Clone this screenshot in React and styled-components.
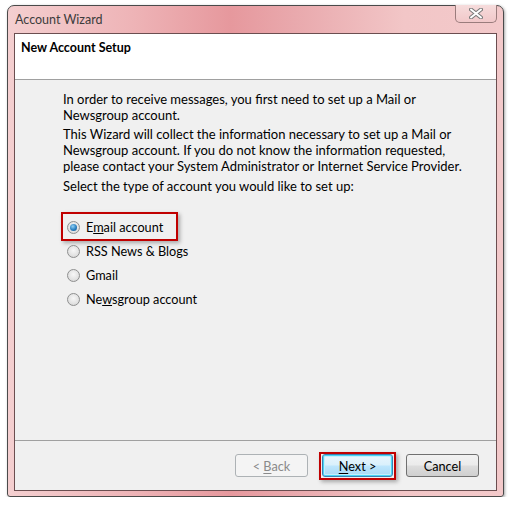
import React from 'react'
import styled, { createGlobalStyle, css } from 'styled-components'

const GlobalStyle = createGlobalStyle`
    html, body {
        margin: 0;
        padding: 0;
        background: #ffffff;
    }
    body {
        font-family: Lato, "Liberation Sans", sans-serif;
        font-size: 12px;
        color: #000;
    }
`

const Window = styled.div`
    box-sizing: border-box;
    width: 497px;
    height: 492px;
    margin: 5px 0 0 7px;
    display: flex;
    flex-direction: column;
    border: 1px solid #4a4a4a;
    border-radius: 7px 7px 3px 3px;
    background: linear-gradient(90deg, #f4cfd0 0%, #eeb4b7 25%, #e6989d 45%, #e9a9ad 58%, #f2c6c7 80%, #f3c9ca 100%);
    box-shadow: 1px 1px 3px rgba(0, 0, 0, 0.35);
`

const TitleBar = styled.div`
    height: 27px;
    display: flex;
    align-items: flex-start;
    justify-content: space-between;
    padding-left: 7px;
    .title-text {
        margin-top: 6px;
        color: #3c3c3c;
        font-size: 12.5px;
    }
`

const CloseButton = styled.div`
    box-sizing: border-box;
    width: 42px;
    height: 18px;
    margin-top: -1px;
    margin-right: 6px;
    border: 1px solid #9a7c7c;
    border-top: none;
    border-radius: 0 0 5px 5px;
    background: linear-gradient(180deg, #f6dcdc 0%, #f1c8c9 100%);
    display: flex;
    align-items: center;
    justify-content: center;
`

const Frame = styled.div`
    flex: 1;
    margin: 0 6px 5px 6px;
    border: 1px solid #6b4e50;
    background: #f0f0f0;
    display: flex;
    flex-direction: column;
`

const Header = styled.div`
    height: 46px;
    background: #ffffff;
    border-bottom: 1px solid #a0a0a0;
    padding: 6px 0 0 6px;
    box-sizing: border-box;
    .header-title {
        font-weight: bold;
        font-size: 12.5px;
    }
`

const Body = styled.div`
    flex: 1;
    padding: 11px 30px 0 48px;
`

const Paragraph = styled.p`
    margin: 0 0 ${p => p.gap || 2}px 0;
    line-height: 16px;
    font-size: 13px;
    white-space: nowrap;
`

const OptionList = styled.div`
    margin-top: 21px;
    display: flex;
    flex-direction: column;
`

const Option = styled.label`
    position: relative;
    height: 24px;
    display: flex;
    align-items: center;
    gap: 6px;
    padding-left: 4px;
    font-size: 12.7px;
    ${p => p.highlighted && css`
        &::after {
            content: '';
            position: absolute;
            left: -2px;
            top: -3px;
            width: 113px;
            height: 25px;
            border: 2px solid #c00000;
            box-shadow: 2px 2px 4px rgba(0, 0, 0, 0.3);
            pointer-events: none;
        }
    `}
`

const Radio = styled.span`
    box-sizing: border-box;
    width: 13px;
    height: 13px;
    border-radius: 50%;
    border: 1px solid #8e8f8f;
    background: radial-gradient(circle at 50% 40%, #f7f7f7 0%, #e2e2e2 60%, #cfcfcf 100%);
    display: flex;
    align-items: center;
    justify-content: center;
    &::before {
        content: '';
        display: ${p => (p.checked ? 'block' : 'none')};
        width: 7px;
        height: 7px;
        border-radius: 50%;
        background: radial-gradient(circle at 40% 35%, #8fd0f4 0%, #2a7fc0 55%, #0d4f8a 100%);
    }
`

const Footer = styled.div`
    height: 50px;
    border-top: 1px solid #a0a0a0;
    box-sizing: border-box;
    display: flex;
    justify-content: flex-end;
    align-items: flex-start;
    padding: 13px 17px 0 0;
`

const Button = styled.button`
    position: relative;
    box-sizing: border-box;
    width: ${p => p.width || 73}px;
    height: 23px;
    margin-left: ${p => p.gap || 0}px;
    padding: 0;
    font-family: inherit;
    font-size: 12.7px;
    border-radius: 3px;
    border: 1px solid #707070;
    color: #000;
    background: linear-gradient(180deg, #f2f2f2 0%, #ebebeb 48%, #dddddd 52%, #cfcfcf 100%);
    ${p => p.disabled && css`
        border-color: #adb2b5;
        color: #8a8a8a;
        background: #f4f4f4;
    `}
    ${p => p.focused && css`
        border-color: #3c7fb1;
        box-shadow: inset 0 0 0 1px #48d6f6, inset 0 0 0 2px #c6eefc;
        background: linear-gradient(180deg, #eaf6fd 0%, #d9f0fc 48%, #bee6fd 52%, #a7d9f5 100%);
        &::after {
            content: '';
            position: absolute;
            left: -4px;
            top: -3px;
            right: -4px;
            bottom: -4px;
            border: 2px solid #c00000;
            box-shadow: 2px 2px 4px rgba(0, 0, 0, 0.3);
        }
    `}
    u {
        text-underline-offset: 2px;
    }
`

const CloseGlyph = () => (
    <svg width="14" height="11" viewBox="0 0 14 11">
        <path d="M2 1.5 L12 9.5 M12 1.5 L2 9.5" stroke="#7a7a7a" strokeWidth="4" strokeLinecap="round" />
        <path d="M2 1.5 L12 9.5 M12 1.5 L2 9.5" stroke="#ffffff" strokeWidth="2" strokeLinecap="round" />
    </svg>
)

const options = [
    { label: <>E<u>m</u>ail account</>, checked: true },
    { label: <>RSS News &amp; Blogs</> },
    { label: <>Gmail</> },
    { label: <>Ne<u>w</u>sgroup account</> },
]

const App = () => {
    return (
        <>
            <GlobalStyle />
            <Window>
                <TitleBar>
                    <span className="title-text">Account Wizard</span>
                    <CloseButton>
                        <CloseGlyph />
                    </CloseButton>
                </TitleBar>
                <Frame>
                    <Header>
                        <span className="header-title">New Account Setup</span>
                    </Header>
                    <Body>
                        <Paragraph gap={3}>
                            In order to receive messages, you first need to set up a Mail or<br />
                            Newsgroup account.
                        </Paragraph>
                        <Paragraph gap={4}>
                            This Wizard will collect the information necessary to set up a Mail or<br />
                            Newsgroup account. If you do not know the information requested,<br />
                            please contact your System Administrator or Internet Service Provider.
                        </Paragraph>
                        <Paragraph>Select the type of account you would like to set up:</Paragraph>
                        <OptionList>
                            {options.map((o, i) => (
                                <Option key={i} highlighted={o.checked}>
                                    <Radio checked={o.checked} />
                                    <span>{o.label}</span>
                                </Option>
                            ))}
                        </OptionList>
                    </Body>
                    <Footer>
                        <Button disabled>&lt; <u>B</u>ack</Button>
                        <Button gap={14} width={71} focused><u>N</u>ext &gt;</Button>
                        <Button gap={13}>Cancel</Button>
                    </Footer>
                </Frame>
            </Window>
        </>
    )
}

export default App
